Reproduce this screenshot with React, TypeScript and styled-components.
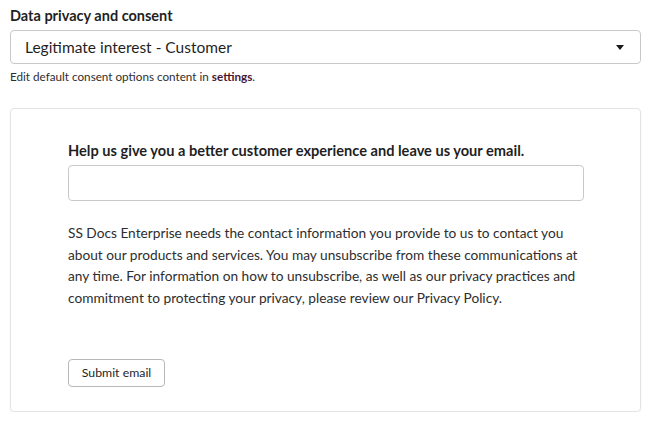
import styled, { createGlobalStyle } from 'styled-components';

const GlobalStyle = createGlobalStyle`
  html, body {
    margin: 0;
    padding: 0;
    background: #ffffff;
  }
  body {
    font-family: Lato, "Liberation Sans", sans-serif;
    color: #33475b;
  }
`;

const Page = styled.div`
  width: 650px;
  padding: 7px 9px 0 10px;
  box-sizing: border-box;
  display: flex;
  flex-direction: column;
`;

const FieldLabel = styled.label`
  font-size: 14.5px;
  font-weight: 700;
  color: #1f1f1f;
  line-height: 17px;
  margin-bottom: 6px;
`;

const Select = styled.div`
  height: 34px;
  border: 1px solid #c9c9c9;
  border-radius: 4px;
  display: flex;
  align-items: center;
  justify-content: space-between;
  padding: 0 16px 0 14px;
  box-sizing: border-box;
  font-size: 15.5px;
  color: #1f1f1f;
`;

const Caret = styled.span`
  width: 0;
  height: 0;
  border-left: 4.5px solid transparent;
  border-right: 4.5px solid transparent;
  border-top: 5px solid #1a1a1a;
`;

const Help = styled.p`
  margin: 5px 0 0;
  font-size: 11.7px;
  line-height: 15px;
  color: #2e2e2e;

  a {
    color: #4a1530;
    font-weight: 700;
    text-decoration: none;
  }
`;

const Card = styled.section`
  margin-top: 24px;
  height: 304px;
  border: 1px solid #e3e3e3;
  border-radius: 4px;
  box-shadow: 0 1px 2px rgba(0, 0, 0, 0.06);
  box-sizing: border-box;
  padding: 33px 58px 0 57px;
  display: flex;
  flex-direction: column;
  align-items: flex-start;
`;

const Heading = styled.h3`
  margin: 0;
  font-size: 14.6px;
  line-height: 17px;
  font-weight: 700;
  color: #1f1f1f;
`;

const EmailInput = styled.input`
  margin-top: 6px;
  width: 516px;
  height: 36px;
  border: 1px solid #c9c9c9;
  border-radius: 4px;
  box-sizing: border-box;
`;

const Body = styled.p`
  margin: 21px 0 0;
  font-size: 13.7px;
  line-height: 21.7px;
  color: #2e2e2e;
  white-space: nowrap;
`;

const SubmitButton = styled.button`
  margin-top: 50px;
  width: 97px;
  height: 28px;
  border: 1px solid #b8b8b8;
  border-radius: 4px;
  background: #ffffff;
  font-family: inherit;
  font-size: 12.3px;
  color: #1f1f1f;
`;

const lines = [
  'SS Docs Enterprise needs the contact information you provide to us to contact you',
  'about our products and services. You may unsubscribe from these communications at',
  'any time. For information on how to unsubscribe, as well as our privacy practices and',
  'commitment to protecting your privacy, please review our Privacy Policy.',
];

export default function App() {
  return (
    <>
      <GlobalStyle />
      <Page>
        <FieldLabel>Data privacy and consent</FieldLabel>
        <Select>
          <span>Legitimate interest - Customer</span>
          <Caret />
        </Select>
        <Help>
          Edit default consent options content in <a href="#">settings</a>.
        </Help>
        <Card>
          <Heading>Help us give you a better customer experience and leave us your email.</Heading>
          <EmailInput type="email" />
          <Body>
            {lines.map((l, i) => (
              <span key={i}>
                {l}
                {i < lines.length - 1 && <br />}
              </span>
            ))}
          </Body>
          <SubmitButton>Submit email</SubmitButton>
        </Card>
      </Page>
    </>
  );
}
